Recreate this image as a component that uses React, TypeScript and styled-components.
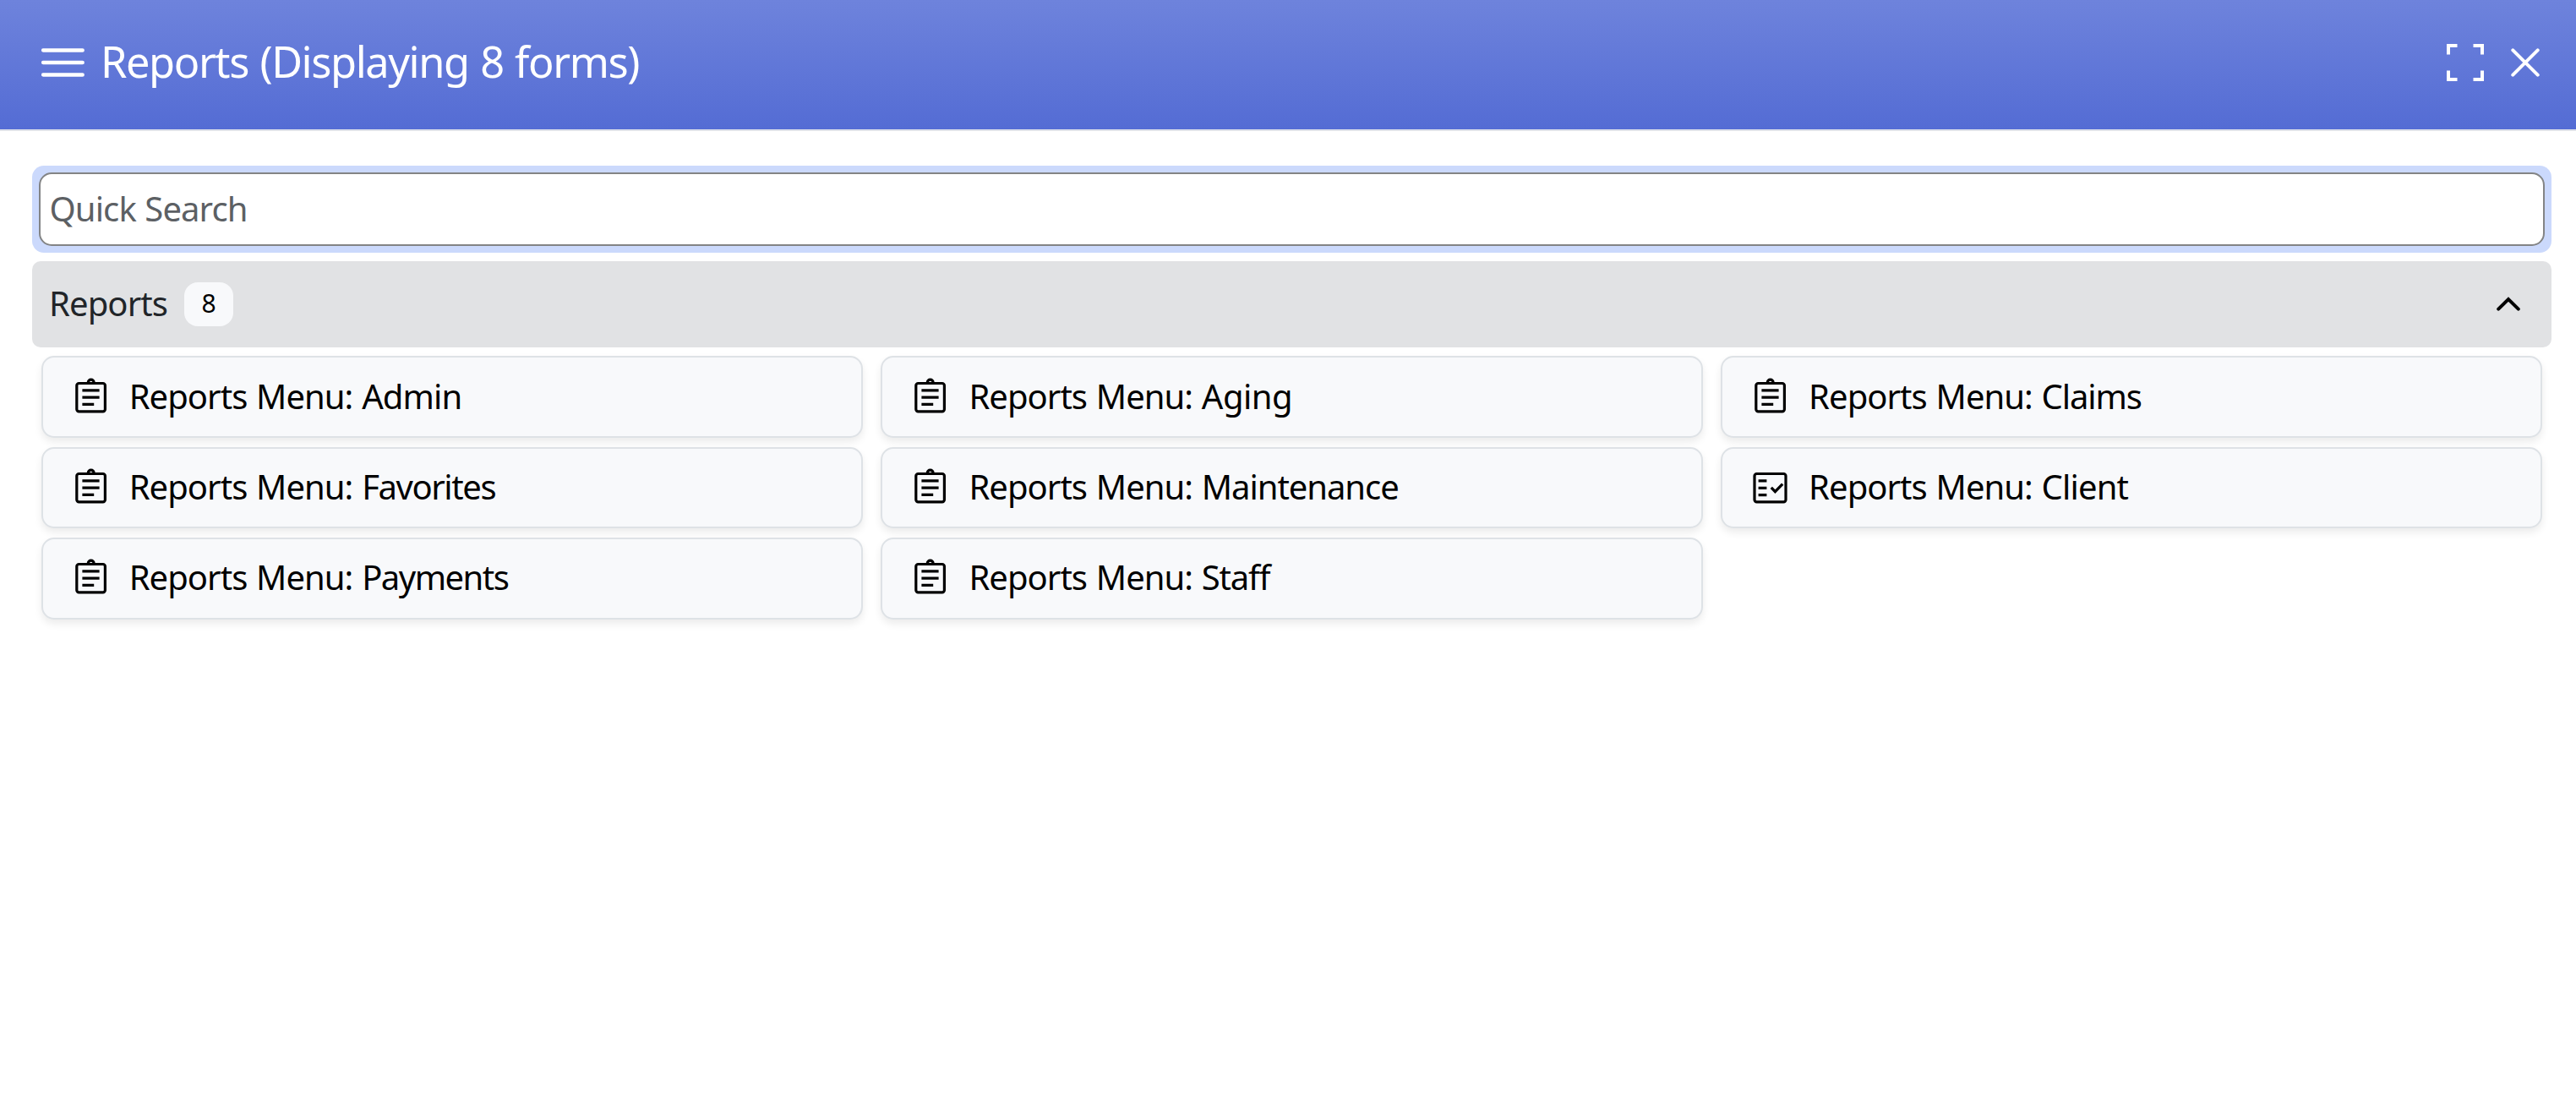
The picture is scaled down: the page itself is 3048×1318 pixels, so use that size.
import React from "react";
import styled, { createGlobalStyle } from "styled-components";

const GlobalStyle = createGlobalStyle`
  *, *::before, *::after { box-sizing: border-box; }
  body { margin: 0; background: #fff; font-family: "Noto Sans", "Open Sans", sans-serif; }
  button, input { font: inherit; color: inherit; }
`;

const Page = styled.div`
  min-height: 1318px;
  background: #fff;
`;

const Header = styled.header`
  display: flex;
  align-items: center;
  height: 155px;
  padding: 0 43px 5px 49px;
  border-bottom: 2px solid #dfe2ea;
  background: linear-gradient(#6e83dc, #546cd4) padding-box;
  color: #fff;
`;

const Title = styled.h1`
  flex: 1;
  margin: 0 0 3px 19px;
  font-size: 50.5px;
  font-weight: 400;
  line-height: 68px;
  letter-spacing: -1.4px;
  word-spacing: 1.7px;
  white-space: nowrap;
`;

const IconButton = styled.button`
  display: flex;
  padding: 0;
  border: 0;
  background: none;
  & + & { margin-left: 32px; }
`;

const Content = styled.main`
  padding: 41px 29px 0 38px;
`;

const SearchFrame = styled.div`
  padding: 8px;
  border-radius: 14px;
  background: #cbd9fc;
`;

const SearchInput = styled.input`
  display: block;
  width: 100%;
  height: 87px;
  padding: 0 12px 3px 10.5px;
  border: 2px solid #838485;
  border-radius: 15px;
  outline: none;
  background: #fff;
  font-size: 40px;
  letter-spacing: -0.9px;
  word-spacing: 1px;
  &::placeholder { color: #5c6064; opacity: 1; }
`;

const GroupHeader = styled.button`
  display: flex;
  align-items: center;
  width: 100%;
  height: 102px;
  margin-top: 10px;
  padding: 0 37px 2px 20px;
  border: 0;
  border-radius: 10px;
  background: #e1e2e4;
  color: #212529;
`;

const GroupName = styled.span`
  font-size: 40px;
  line-height: 54px;
  letter-spacing: -0.9px;
`;

const Badge = styled.span`
  display: grid;
  place-items: center;
  width: 58px;
  height: 52px;
  margin: 2px auto 0 20px;
  padding-bottom: 2px;
  border-radius: 16px;
  background: #f8f9fb;
  color: #000;
  font-size: 30px;
  line-height: 1;
`;

const Grid = styled.div`
  display: grid;
  grid-template-columns: repeat(3, 1fr);
  gap: 10.67px 21.33px;
  padding: 10.33px 10.5px 0 10.67px;
`;

const Card = styled.button`
  display: flex;
  align-items: center;
  height: 96.67px;
  padding: 0 35px 2px 33px;
  border: 2px solid #dee2e6;
  border-radius: 15px;
  background: #f8f9fb;
  box-shadow: 0 5px 10px rgba(0, 0, 0, 0.08);
  color: #000;
`;

const CardLabel = styled.span`
  margin-left: 21px;
  font-size: 40px;
  line-height: 54px;
  letter-spacing: -0.95px;
  word-spacing: 1.3px;
  white-space: nowrap;
`;

const FormName = styled.span<{ $tracking: number }>`
  letter-spacing: ${(p) => p.$tracking}px;
`;

const MenuIcon = () => (
  <svg width="51" height="36" viewBox="0 0 51 36" fill="none" stroke="currentColor" strokeWidth="4.6" strokeLinecap="round">
    <path d="M2.2 3.5h46.4M2.2 18h46.4M2.2 32.5h46.4" />
  </svg>
);

const ExpandIcon = () => (
  <svg width="44" height="44" viewBox="0 0 44 44" fill="none" stroke="currentColor" strokeWidth="4">
    <path d="M2 12.5V2h10.5M31.5 2H42v10.5M42 31.5V42H31.5M12.5 42H2V31.5" />
  </svg>
);

const CloseIcon = () => (
  <svg width="34" height="34" viewBox="0 0 34 34" fill="none" stroke="currentColor" strokeWidth="4" strokeLinecap="round">
    <path d="M2.3 2.3l29.4 29.4M31.7 2.3L2.3 31.7" />
  </svg>
);

const ChevronUpIcon = () => (
  <svg width="28" height="17" viewBox="0 0 28 17" fill="none" stroke="#000" strokeWidth="4" strokeLinecap="round" strokeLinejoin="miter">
    <path d="M2.2 14.6L14 3L25.8 14.6" />
  </svg>
);

const ClipboardIcon = () => (
  <svg width="48" height="48" viewBox="0 0 48 48" fill="none" stroke="currentColor" strokeWidth="3.2">
    <rect x="6.8" y="8.5" width="33.6" height="33.4" rx="2.6" />
    <path d="M20.3 8.5V7.6a3.4 3.4 0 0 1 6.8 0v.9M13.4 16.8h20.2M13.4 25.1h20.2M13.4 33.4h13.8" />
  </svg>
);

const ChecklistIcon = () => (
  <svg width="48" height="48" viewBox="0 0 48 48" fill="none" stroke="currentColor" strokeWidth="3.2">
    <rect x="5" y="8.5" width="37" height="33.4" rx="2.6" />
    <path d="M9.6 16.8h9.8M9.6 25.3h9.8M9.6 33.7h9.8M24.8 24.8l4.6 4.8 8.8-9" />
  </svg>
);

type Form = { name: string; tracking: number; checklist?: boolean };

const forms: Form[] = [
  { name: "Admin", tracking: -0.9 },
  { name: "Aging", tracking: -0.5 },
  { name: "Claims", tracking: -1.1 },
  { name: "Favorites", tracking: -1.4 },
  { name: "Maintenance", tracking: -1.05 },
  { name: "Client", tracking: -0.85, checklist: true },
  { name: "Payments", tracking: -1.5 },
  { name: "Staff", tracking: -1.2 },
];

export default function App() {
  return (
    <Page>
      <GlobalStyle />
      <Header>
        <IconButton aria-label="Menu"><MenuIcon /></IconButton>
        <Title>Reports (Displaying {forms.length} forms)</Title>
        <IconButton aria-label="Full screen"><ExpandIcon /></IconButton>
        <IconButton aria-label="Close"><CloseIcon /></IconButton>
      </Header>
      <Content>
        <SearchFrame>
          <SearchInput type="text" placeholder="Quick Search" />
        </SearchFrame>
        <GroupHeader>
          <GroupName>Reports</GroupName>
          <Badge>{forms.length}</Badge>
          <ChevronUpIcon />
        </GroupHeader>
        <Grid>
          {forms.map(({ name, tracking, checklist }) => (
            <Card key={name}>
              {checklist ? <ChecklistIcon /> : <ClipboardIcon />}
              <CardLabel>
                Reports Menu: <FormName $tracking={tracking}>{name}</FormName>
              </CardLabel>
            </Card>
          ))}
        </Grid>
      </Content>
    </Page>
  );
}
